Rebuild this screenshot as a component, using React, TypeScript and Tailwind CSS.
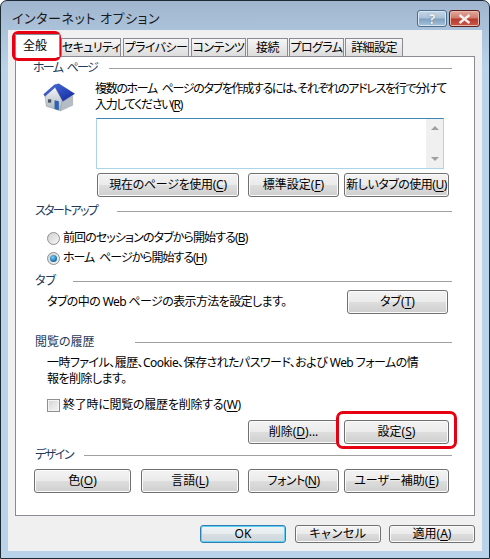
import type { ReactNode } from 'react';

const TABS = [
    { label: 'セキュリティ', className: 'ml-px w-[60px]' },
    { label: 'プライバシー', className: 'ml-[2px] w-[66px]' },
    { label: 'コンテンツ', className: 'ml-[2px] w-[55px]' },
    { label: '接続', className: 'ml-px w-[41px]' },
    { label: 'プログラム', className: 'ml-px w-[55px]' },
    { label: '詳細設定', className: 'ml-px w-[58px]' },
];

function Key({ children }: { children: ReactNode }) {
    return <span className="underline underline-offset-2">{children}</span>;
}

function Heading({ label, className, labelClass, lineClass }: { label: string; className: string; labelClass: string; lineClass: string }) {
    return (
        <div className={`flex h-4 items-center pr-[22px] ${className}`}>
            <span className={`whitespace-nowrap text-[#1e395b] ${labelClass}`}>{label}</span>
            <div className={`h-px flex-1 bg-[#a0a0a0] ${lineClass}`} />
        </div>
    );
}

function Btn({ children, className }: { children: ReactNode; className: string }) {
    return (
        <div
            className={`flex h-6 shrink-0 items-center justify-center whitespace-nowrap rounded-[3px] border border-[#707070] bg-[linear-gradient(#f3f3f3_0%,#ebebeb_48%,#dddddd_52%,#cfcfcf_100%)] shadow-[inset_0_0_0_1px_#fbfbfb] ${className}`}
        >
            {children}
        </div>
    );
}

function FooterBtn({ children, className, primary }: { children: ReactNode; className?: string; primary?: boolean }) {
    return (
        <div
            className={`flex h-[18px] w-[86px] shrink-0 items-center justify-center whitespace-nowrap rounded-[3px] border ${
                primary
                    ? 'border-[#2f7fb5] bg-[linear-gradient(#eef3f6_0%,#e6ebee_48%,#d8dfe3_52%,#ccd6dc_100%)] shadow-[inset_0_0_0_1px_#5fd0f2]'
                    : 'border-[#707070] bg-[linear-gradient(#f3f3f3_0%,#ebebeb_48%,#dddddd_52%,#cfcfcf_100%)] shadow-[inset_0_0_0_1px_#fbfbfb]'
            } ${className ?? ''}`}
        >
            {children}
        </div>
    );
}

function HouseIcon() {
    return (
        <svg width="33" height="30" viewBox="40 38 100 90" className="ml-[27px] mt-[2px] shrink-0">
            <defs>
                <linearGradient id="roof" x1="0" y1="0" x2="1" y2="1">
                    <stop offset="0" stopColor="#4a74e0" />
                    <stop offset="1" stopColor="#12269c" />
                </linearGradient>
                <linearGradient id="wall" x1="0" y1="0" x2="0" y2="1">
                    <stop offset="0" stopColor="#f4f6f8" />
                    <stop offset="1" stopColor="#a9b3bd" />
                </linearGradient>
            </defs>
            <path d="M46 76 L77 50 L99 90 L93 122 L50 108 Z" fill="url(#wall)" stroke="#8a949e" strokeWidth="1.5" />
            <path d="M97 92 L130 76 L130 105 L93 122 Z" fill="#b4bcc4" stroke="#98a1aa" strokeWidth="1.5" />
            <path d="M42 72 L75 43 L88 40 L136 70 L100 93 L77 50 L46 78 Z" fill="url(#roof)" stroke="#1b2f8f" strokeWidth="1" />
            <rect x="55" y="87" width="10" height="10" fill="#47525e" />
            <path d="M75 90 L88 93 L88 120 L75 116 Z" fill="#2f62b0" />
        </svg>
    );
}

function Radio({ checked }: { checked?: boolean }) {
    return (
        <div className="flex size-[13px] shrink-0 items-center justify-center rounded-full border border-[#8e8f8f] bg-[linear-gradient(135deg,#d0d0d0,#f6f6f6)]">
            {checked && <div className="size-[7px] rounded-full bg-[radial-gradient(circle_at_40%_35%,#7fd0f5,#0f6aa8_70%,#0b4f80)]" />}
        </div>
    );
}

function ScrollArrow({ up }: { up?: boolean }) {
    return (
        <svg width="8" height="4" viewBox="0 0 8 4">
            <path d={up ? 'M4 0 L8 4 L0 4 Z' : 'M0 0 L8 0 L4 4 Z'} fill="#a0a0a0" />
        </svg>
    );
}

export default function App() {
    return (
        <div className="relative flex h-[559px] w-[490px] flex-col overflow-hidden rounded-t-[7px] border border-[#1d2a33] bg-[linear-gradient(#a0b6ce_0%,#b9d3ea_12%,#b9d3ea_100%)] font-['Noto_Sans','Noto_Sans_CJK_JP',sans-serif] text-[12px] leading-4 text-black [font-feature-settings:'palt']">
            {/* Title bar */}
            <div className="flex h-[29px] shrink-0 items-start">
                <span className="ml-[11px] mt-[9px] text-[13px] tracking-[0.6px] text-[#1a1a1a]">インターネット オプション</span>
                <div className="ml-auto mr-[9px] mt-[9px] flex gap-[2px]">
                    <div className="flex h-[17px] w-[30px] items-center justify-center rounded-[3px] border border-[#4d6d8c] bg-[linear-gradient(#c5d6e8_0%,#a9c1da_48%,#7f9fc0_52%,#a8c3de_100%)] text-[14px] font-bold leading-none text-[#eef2f6] shadow-[inset_0_0_0_1px_#dbe6f0] [text-shadow:0_0_1px_#3a4a5a]">
                        ?
                    </div>
                    <div className="flex h-[17px] w-[31px] items-center justify-center rounded-[3px] border border-[#5c1d1d] bg-[linear-gradient(#e2a89c_0%,#cf7a6c_48%,#b9392b_52%,#c9584a_100%)] shadow-[inset_0_0_0_1px_#e8b9ae]">
                        <svg width="13" height="10" viewBox="0 0 13 10">
                            <path d="M1.5 1 L11.5 9 M11.5 1 L1.5 9" stroke="#f4f0ee" strokeWidth="2.4" />
                        </svg>
                    </div>
                </div>
            </div>

            {/* Dialog body */}
            <div className="mx-[7px] mb-[7px] flex flex-1 flex-col bg-[#f0f0f0] px-[7px]">
                <div className="flex h-[26px] shrink-0 items-end">
                    <div className="relative z-10 -mb-px flex h-[23px] w-[45px] items-center justify-center border border-b-0 border-[#898c95] bg-white pr-[5px] text-[12px]">
                        全般
                    </div>
                    {TABS.map((tab) => (
                        <div
                            key={tab.label}
                            className={`flex h-[18px] items-center justify-center whitespace-nowrap border border-b-0 border-[#898c95] bg-[linear-gradient(#f6f6f6,#dcdcdc)] tracking-[-0.6px] ${tab.className}`}
                        >
                            {tab.label}
                        </div>
                    ))}
                </div>

                <div className="h-[460px] shrink-0 border border-[#898c95] bg-white">
                    <Heading label="ホーム ページ" className="mt-[3px] pl-[17px]" labelClass="tracking-[-1.7px] [word-spacing:3px]" lineClass="ml-[12px]" />
                    <div className="mt-[5px] flex">
                        <HouseIcon />
                        <div className="ml-[19px] pr-[20px] tracking-[-1.33px] [word-spacing:3px]">
                            <div>複数のホーム ページのタブを作成するには、それぞれのアドレスを行で分けて</div>
                            <div>入力してください(<Key>R</Key>)</div>
                        </div>
                    </div>
                    <div className="ml-[80px] mt-[5px] flex h-[51px] w-[348px] justify-end border border-[#abd3ea] border-t-[#3f85b8] bg-white">
                        <div className="flex w-[17px] flex-col items-center justify-between bg-[#f0f0f0] py-[7px]">
                            <ScrollArrow up />
                            <ScrollArrow />
                        </div>
                    </div>
                    <div className="mt-1 flex">
                        <Btn className="ml-[81px] w-[142px] tracking-[-0.3px]">現在のページを使用(<Key>C</Key>)</Btn>
                        <Btn className="ml-[9px] w-[91px]">標準設定(<Key>F</Key>)</Btn>
                        <Btn className="ml-[5px] w-[105px] tracking-[-0.5px]">新しいタブの使用(<Key>U</Key>)</Btn>
                    </div>

                    <Heading label="スタートアップ" className="mt-[6px] pl-[19px]" labelClass="tracking-[-1.7px]" lineClass="ml-[20px]" />
                    <div className="ml-[31px] mt-[9px] flex h-5 items-center gap-[3px]">
                        <Radio />
                        <span className="tracking-[-0.9px]">前回のセッションのタブから開始する(<Key>B</Key>)</span>
                    </div>
                    <div className="ml-[31px] flex h-5 items-center gap-[3px]">
                        <Radio checked />
                        <span className="tracking-[-1.05px] [word-spacing:3px]">ホーム ページから開始する(<Key>H</Key>)</span>
                    </div>

                    <Heading label="タブ" className="mt-[5px] pl-[19px]" labelClass="" lineClass="ml-[17px]" />
                    <div className="mt-px flex items-center">
                        <span className="ml-[31px] tracking-[-0.6px]">タブの中の Web ページの表示方法を設定します。</span>
                        <Btn className="ml-auto mr-[26px] w-[101px]">タブ(<Key>T</Key>)</Btn>
                    </div>

                    <Heading label="閲覧の履歴" className="mt-5 pl-[19px]" labelClass="" lineClass="ml-[40px]" />
                    <div className="ml-[31px] mt-[5px] tracking-[-0.55px]">
                        <div>一時ファイル、履歴、Cookie、保存されたパスワード、および Web フォームの情</div>
                        <div>報を削除します。</div>
                    </div>
                    <div className="ml-[31px] mt-[10px] flex h-4 items-center gap-[3px]">
                        <div className="size-[13px] shrink-0 border border-[#8e8f8f] bg-[linear-gradient(135deg,#d4d4d4,#f6f6f6)] shadow-[inset_0_0_0_1px_#f4f4f4]" />
                        <span className="tracking-[-0.25px]">終了時に閲覧の履歴を削除する(<Key>W</Key>)</span>
                    </div>
                    <div className="mt-[7px] flex">
                        <Btn className="ml-[232px] w-[91px]">削除(<Key>D</Key>)...</Btn>
                        <Btn className="ml-[5px] w-[105px]">設定(<Key>S</Key>)</Btn>
                    </div>

                    <Heading label="デザイン" className="mt-[3px] pl-[19px]" labelClass="tracking-[-1.5px]" lineClass="ml-[11px]" />
                    <div className="mt-[6px] flex">
                        <Btn className="ml-[18px] w-[97px]">色(<Key>O</Key>)</Btn>
                        <Btn className="ml-[10px] w-[98px]">言語(<Key>L</Key>)</Btn>
                        <Btn className="ml-[9px] w-[91px] tracking-[-0.5px]">フォント(<Key>N</Key>)</Btn>
                        <Btn className="ml-[5px] w-[105px]">ユーザー補助(<Key>E</Key>)</Btn>
                    </div>
                </div>

                <div className="flex pl-[185px] pt-[9px]">
                    <FooterBtn primary>OK</FooterBtn>
                    <FooterBtn className="ml-[9px] tracking-[0.6px]">キャンセル</FooterBtn>
                    <FooterBtn className="ml-2">適用(<Key>A</Key>)</FooterBtn>
                </div>
            </div>

            {/* Red callouts */}
            <div className="absolute left-[11px] top-[30px] h-[30px] w-[49px] rounded-[6px] border-[3px] border-[#e60012]" />
            <div className="absolute left-[335px] top-[410px] h-[38px] w-[121px] rounded-[7px] border-[3px] border-[#e60012]" />
        </div>
    );
}
